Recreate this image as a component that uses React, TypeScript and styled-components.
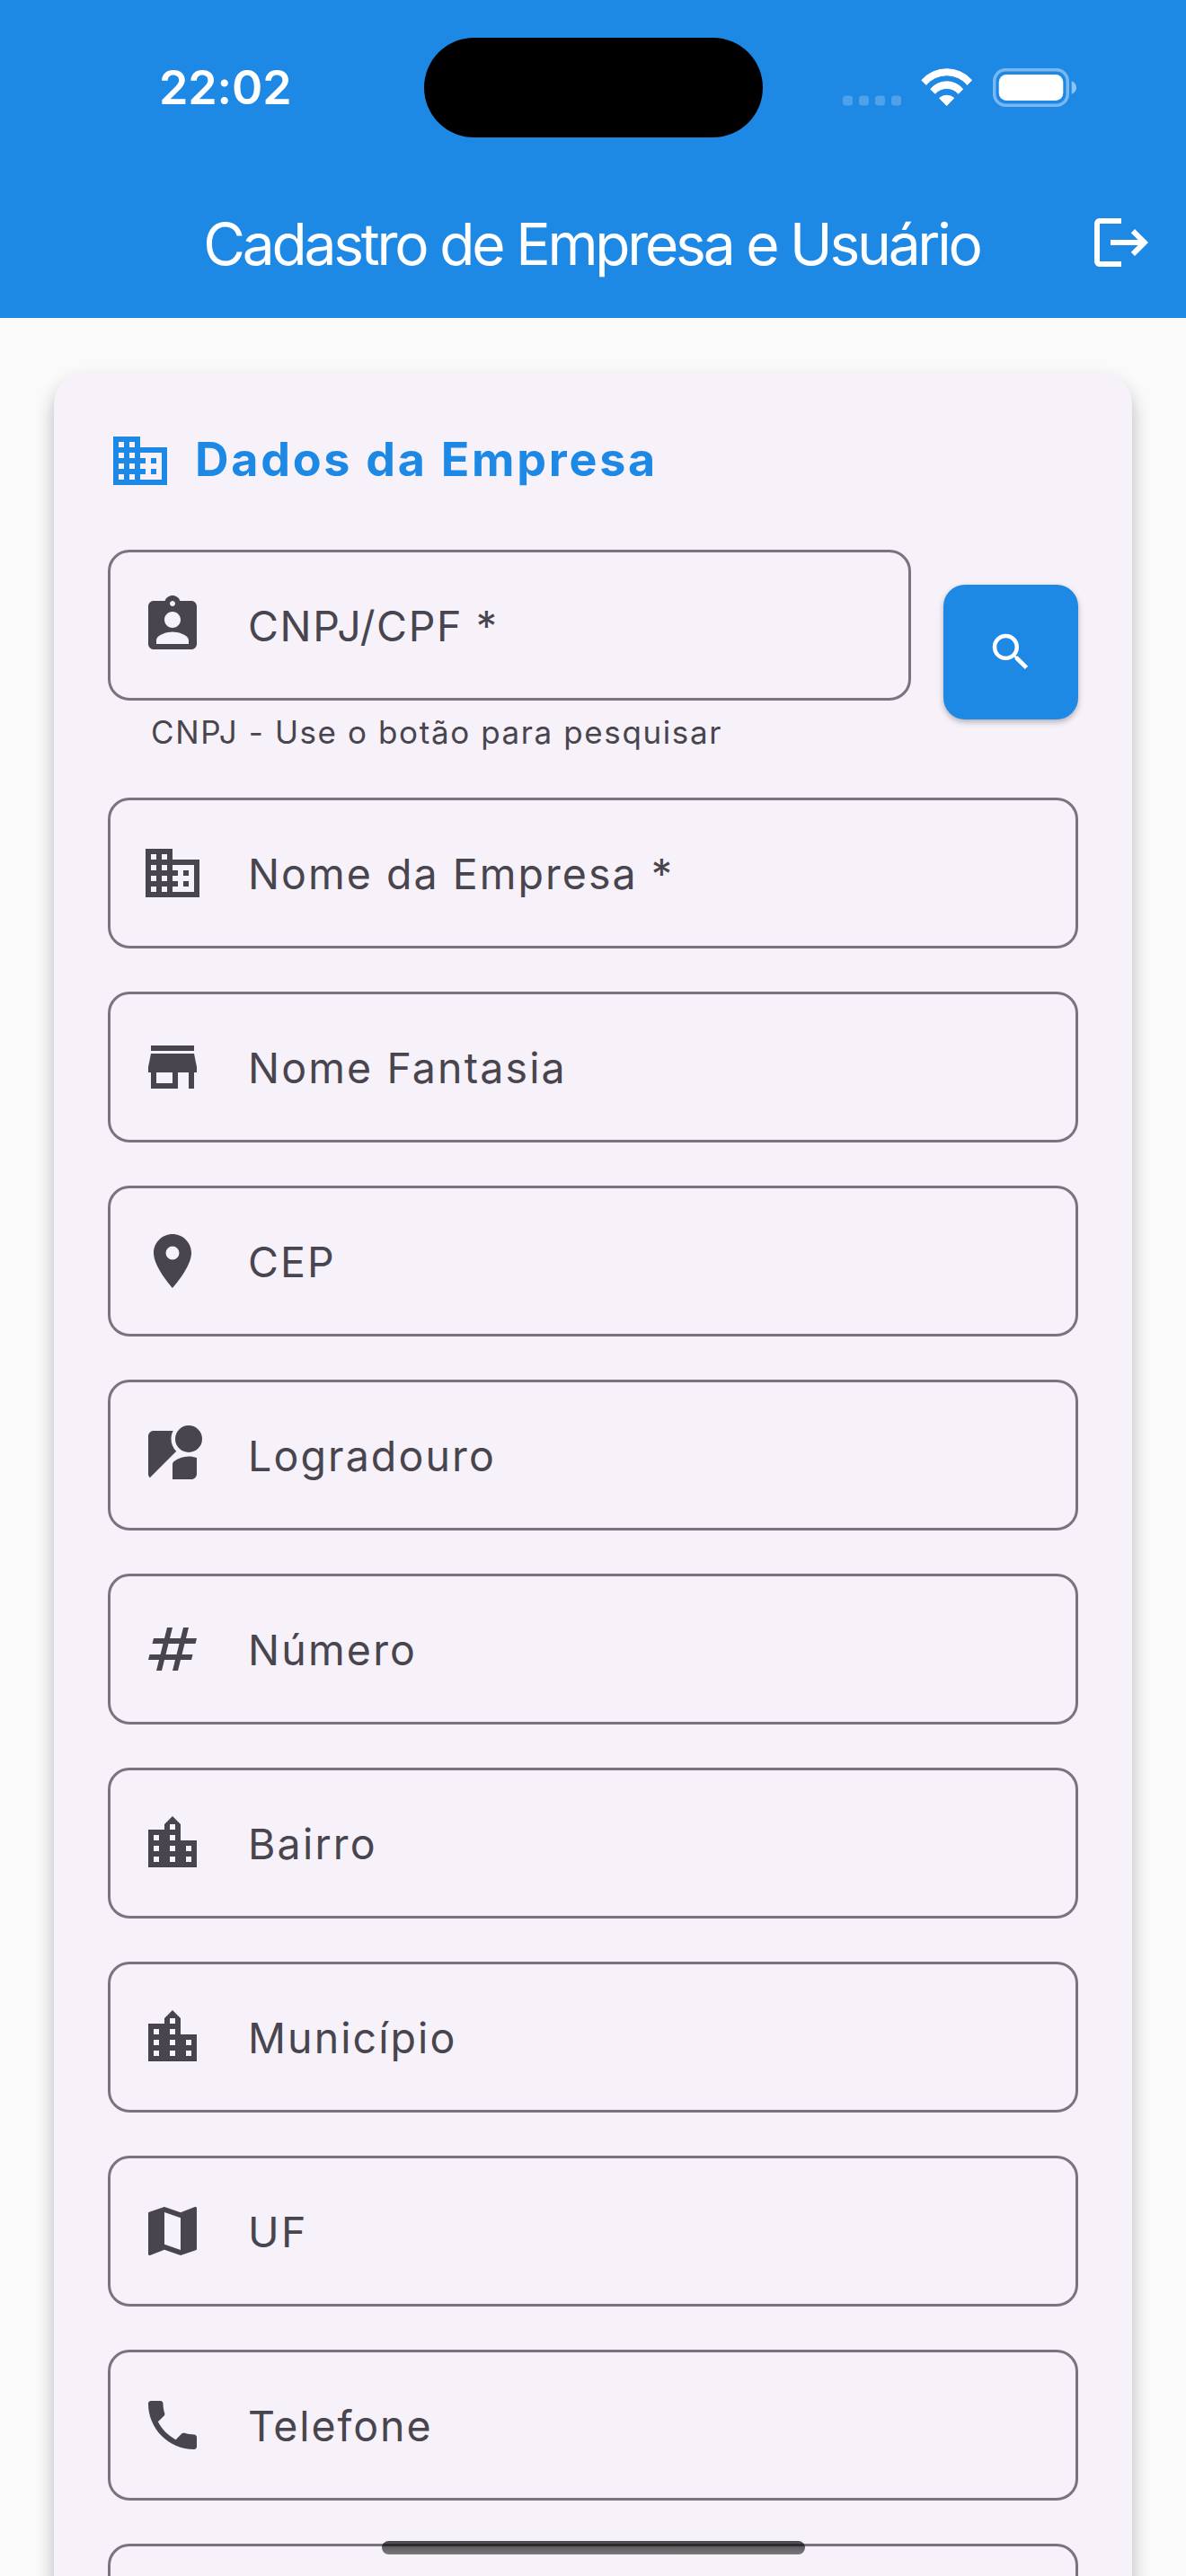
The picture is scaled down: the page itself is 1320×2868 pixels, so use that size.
import React from 'react';
import styled, { createGlobalStyle } from 'styled-components';
import type { IconType } from 'react-icons';
import {
  MdAssignmentInd,
  MdBusiness,
  MdLocationCity,
  MdLocationOn,
  MdLogout,
  MdMap,
  MdNumbers,
  MdPhone,
  MdSearch,
  MdStore,
  MdStreetview,
} from 'react-icons/md';

const color = {
  primary: '#1e88e5',
  background: '#fafafa',
  surface: '#f7f2fa',
  outline: '#79747e',
  onSurface: '#49454f',
};

const GlobalStyle = createGlobalStyle`
  * { box-sizing: border-box; }
  body {
    margin: 0;
    background: ${color.background};
    font-family: Inter, "Liberation Sans", sans-serif;
  }
`;

const Screen = styled.div`
  position: relative;
  display: flex;
  flex-direction: column;
  width: 1320px;
  height: 2868px;
  overflow: hidden;
  background: ${color.background};
`;

const Header = styled.header`
  flex: none;
  height: 354px;
  color: #fff;
  background: ${color.primary};
`;

const StatusBar = styled.div`
  display: grid;
  grid-template-columns: 1fr 377px 1fr;
  align-items: center;
  height: 186px;
  padding-top: 8px;
`;

const Clock = styled.div`
  padding: 2px 0 0 177px;
  font-size: 52px;
  font-weight: 600;
  line-height: 62px;
  letter-spacing: -0.1px;
`;

const Island = styled.div`
  height: 111px;
  border-radius: 56px;
  background: #000;
`;

const StatusIcons = styled.div`
  display: flex;
  align-items: center;
  justify-content: flex-end;
  gap: 22px;
  padding-right: 122px;

  svg {
    display: block;
  }
`;

const Toolbar = styled.div`
  display: grid;
  grid-template-columns: 1fr auto 1fr;
  align-items: center;
  height: 168px;
  padding: 0 36px;
`;

const PageTitle = styled.h1`
  grid-column: 2;
  margin: 0;
  padding: 3px 3px 0 0;
  font-size: 64px;
  font-weight: 400;
  line-height: 84px;
  letter-spacing: -3.22px;
  white-space: nowrap;
`;

const IconButton = styled.button`
  justify-self: end;
  display: flex;
  padding: 0;
  border: 0;
  color: inherit;
  background: none;
  font-size: 72px;
`;

const Card = styled.main`
  flex: none;
  display: flex;
  flex-direction: column;
  gap: 48px;
  margin: 60px 60px 0;
  padding: 60px;
  border-radius: 36px;
  background: ${color.surface};
  box-shadow: 0 12px 20px rgba(0, 0, 0, 0.27);
`;

const SectionTitle = styled.h2`
  display: flex;
  align-items: center;
  gap: 24px;
  height: 78px;
  margin: 0 0 12px;
  color: ${color.primary};
  font-size: 52px;
  font-weight: 700;
  letter-spacing: 2.74px;
  white-space: nowrap;

  svg {
    font-size: 72px;
  }
`;

const SectionLabel = styled.span`
  padding: 0 0 3px 1px;
`;

const SearchRow = styled.div`
  display: flex;
  align-items: center;
  gap: 36px;
`;

const SearchField = styled.div`
  flex: 1;
`;

const FieldBox = styled.div`
  display: flex;
  align-items: center;
  gap: 48px;
  height: 168px;
  padding: 0 33px;
  border: 3px solid ${color.outline};
  border-radius: 24px;
  color: ${color.onSurface};

  svg {
    flex: none;
    font-size: 72px;
  }
`;

const FieldLabel = styled.span<{ $tracking: number }>`
  padding-top: 2px;
  font-size: 46.5px;
  line-height: 72px;
  letter-spacing: ${(p) => p.$tracking}px;
  white-space: nowrap;
`;

const HelperText = styled.p`
  margin: 11px 0 1px;
  padding-left: 48px;
  color: ${color.onSurface};
  font-size: 35px;
  line-height: 48px;
  letter-spacing: 1.6px;
`;

const SearchButton = styled.button`
  display: flex;
  align-items: center;
  justify-content: center;
  width: 150px;
  height: 150px;
  padding: 0;
  border: 0;
  border-radius: 24px;
  color: #fff;
  background: ${color.primary};
  box-shadow: 0 3px 6px rgba(0, 0, 0, 0.28);
  font-size: 54px;
`;

const HomeIndicator = styled.div`
  position: absolute;
  bottom: 24px;
  left: 425px;
  width: 471px;
  height: 15px;
  border-radius: 8px;
  background: linear-gradient(rgba(0, 0, 0, 0.7), rgba(0, 0, 0, 0.5));
`;

function SignalIcon() {
  return (
    <svg width="65" height="43" viewBox="0 0 65 43" fill="#fff" fillOpacity="0.22">
      {[0, 18, 36, 54].map((x) => (
        <rect key={x} x={x} y="30.5" width="11" height="11" rx="3.5" />
      ))}
    </svg>
  );
}

function WifiIcon() {
  return (
    <svg
      width="58"
      height="43"
      viewBox="0 0 58 43"
      fill="#fff"
      stroke="#fff"
      strokeWidth="1"
      strokeLinejoin="round"
    >
      <path d="M0.8 13.2A37.5 37.5 0 0 1 56.6 13.2L51.6 18.4A30 30 0 0 0 5.8 18.4Z" />
      <path d="M10.7 23.2A23.5 23.5 0 0 1 46.7 23.2L41.6 28.3A17 17 0 0 0 15.8 28.3Z" />
      <path d="M20.6 33.2A12.5 12.5 0 0 1 36.8 33.2L28.7 41.6Z" />
    </svg>
  );
}

function BatteryIcon() {
  return (
    <svg width="93" height="43" viewBox="0 0 93 43" fill="none">
      <rect x="1.75" y="1.75" width="81.5" height="39.5" rx="12.5" stroke="#fff" strokeOpacity="0.4" strokeWidth="3.5" />
      <rect x="6.7" y="7" width="71.6" height="29" rx="8.5" fill="#fff" />
      <path d="M87.7 14.3C91 15.4 93 18.2 93 21.5S91 27.6 87.7 28.7Z" fill="#fff" fillOpacity="0.5" />
    </svg>
  );
}

type FieldProps = { icon?: IconType; label?: string; tracking?: number };

function Field({ icon: Icon, label, tracking = 2.1 }: FieldProps) {
  return (
    <FieldBox>
      {Icon && <Icon />}
      {label && <FieldLabel $tracking={tracking}>{label}</FieldLabel>}
    </FieldBox>
  );
}

const fields: FieldProps[] = [
  { icon: MdBusiness, label: 'Nome da Empresa *', tracking: 2.04 },
  { icon: MdStore, label: 'Nome Fantasia', tracking: 2.12 },
  { icon: MdLocationOn, label: 'CEP', tracking: 2.04 },
  { icon: MdStreetview, label: 'Logradouro', tracking: 2.11 },
  { icon: MdNumbers, label: 'Número', tracking: 2.2 },
  { icon: MdLocationCity, label: 'Bairro', tracking: 2.2 },
  { icon: MdLocationCity, label: 'Município', tracking: 2.08 },
  { icon: MdMap, label: 'UF', tracking: 2.5 },
  { icon: MdPhone, label: 'Telefone', tracking: 1.92 },
];

export default function App() {
  return (
    <>
      <GlobalStyle />
      <Screen>
        <Header>
          <StatusBar>
            <Clock>22:02</Clock>
            <Island />
            <StatusIcons>
              <SignalIcon />
              <WifiIcon />
              <BatteryIcon />
            </StatusIcons>
          </StatusBar>
          <Toolbar>
            <PageTitle>Cadastro de Empresa e Usuário</PageTitle>
            <IconButton aria-label="Sair">
              <MdLogout />
            </IconButton>
          </Toolbar>
        </Header>
        <Card>
          <SectionTitle>
            <MdBusiness />
            <SectionLabel>Dados da Empresa</SectionLabel>
          </SectionTitle>
          <SearchRow>
            <SearchField>
              <Field icon={MdAssignmentInd} label="CNPJ/CPF *" tracking={1.64} />
              <HelperText>CNPJ - Use o botão para pesquisar</HelperText>
            </SearchField>
            <SearchButton aria-label="Pesquisar">
              <MdSearch />
            </SearchButton>
          </SearchRow>
          {fields.map((field) => (
            <Field key={field.label} {...field} />
          ))}
          <Field />
        </Card>
        <HomeIndicator />
      </Screen>
    </>
  );
}
